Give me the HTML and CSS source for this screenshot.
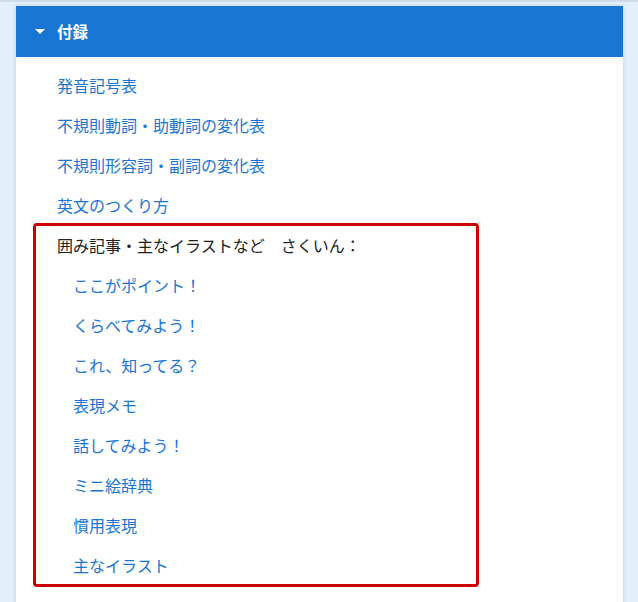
FILE: index.html
```html
<!DOCTYPE html>
<html lang="ja">
   <head>
      <meta charset="UTF-8">
      <title>付録</title>
      <link rel="stylesheet" href="styles.css">
   </head>
   <body>
      <div class="topline"></div>
      <div class="card">
         <div class="card-head">
            <span class="caret"></span>
            <span class="head-title">付録</span>
         </div>
         <ul class="links">
            <li><a href="#">発音記号表</a></li>
            <li><a href="#">不規則動詞・助動詞の変化表</a></li>
            <li><a href="#">不規則形容詞・副詞の変化表</a></li>
            <li><a href="#">英文のつくり方</a></li>
         </ul>
         <div class="boxed">
            <p class="boxed-title">囲み記事・主なイラストなど　さくいん：</p>
            <ul class="sub">
               <li><a href="#">ここがポイント！</a></li>
               <li><a href="#">くらべてみよう！</a></li>
               <li><a href="#">これ、知ってる？</a></li>
               <li><a href="#">表現メモ</a></li>
               <li><a href="#">話してみよう！</a></li>
               <li><a href="#">ミニ絵辞典</a></li>
               <li><a href="#">慣用表現</a></li>
               <li><a href="#">主なイラスト</a></li>
            </ul>
         </div>
      </div>
   </body>
</html>
```

FILE: styles.css
```css
/* page */
body {
  font-family: "Noto Sans CJK JP", "Noto Sans", sans-serif;
  margin: 0;
  padding: 0;
  background-color: #e3effb;
  overflow: hidden;
}
.topline {
  height: 2px;
  background-color: #cfdce8;
}
/* card */
.card {
  margin: 4px 15px 0 16px;
  background-color: #fff;
  box-shadow: 0 0 4px rgba(40, 80, 130, 0.2);
  padding-bottom: 40px;
}
.card-head {
  background-color: #1976d2;
  color: #fff;
  height: 51px;
  display: flex;
  align-items: center;
  padding-left: 19px;
}
.caret {
  width: 0;
  height: 0;
  border-left: 5px solid transparent;
  border-right: 5px solid transparent;
  border-top: 5px solid #fff;
  margin-right: 12px;
}
.head-title {
  font-size: 15.5px;
  font-weight: bold;
  margin-top: -1px;
}
.links, .sub {
  list-style-type: none;
  margin: 0;
  padding: 0;
}
.links {
  padding: 8px 0 0 41px;
}
.links li, .sub li {
  line-height: 40px;
  font-size: 16px;
}
a {
  color: #1976d2;
  text-decoration: none;
}
/* index box */
.boxed {
  margin: -2px 0 0 17px;
  width: 446px;
  border: 3px solid #cc0000;
  border-radius: 4px;
  padding: 0 0 0 21px;
  box-sizing: border-box;
  height: 364px;
  overflow: hidden;
}
.boxed-title {
  margin: 0;
  line-height: 39px;
  font-size: 16px;
  color: #212121;
}
.sub {
  padding-left: 16px;
}
```
